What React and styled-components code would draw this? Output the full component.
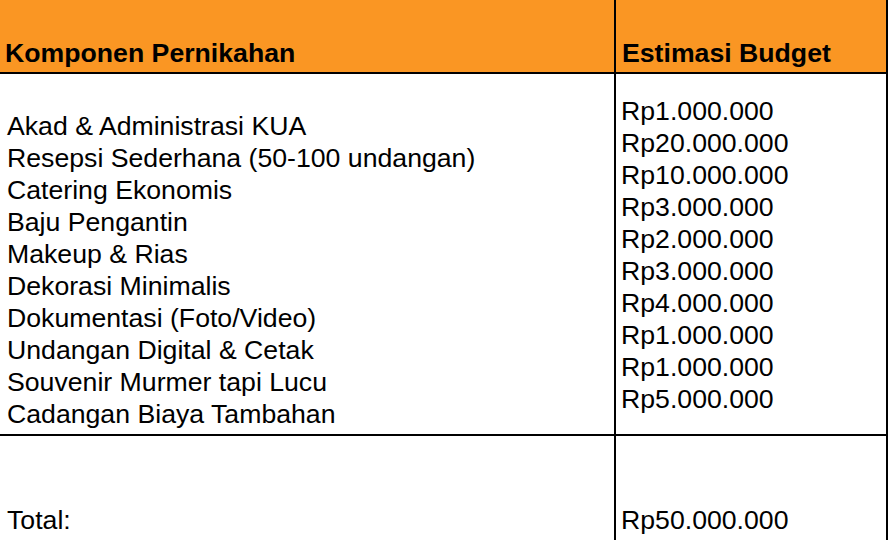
import React from "react";
import styled, { createGlobalStyle } from "styled-components";

const Global = createGlobalStyle`
  html, body { margin: 0; padding: 0; background: #fff; }
  body { font-family: "Liberation Sans", Arial, sans-serif; color: #000; }
`;

const Sheet = styled.div`
  width: 888px;
  font-size: 26.667px;
  line-height: 32px;
`;

const Row = styled.div`
  display: grid;
  grid-template-columns: 614px 274px;
  min-height: ${(p) => p.$height}px;
  background: ${(p) => p.$bg || "#fff"};
  border-bottom: ${(p) => (p.$last ? "none" : "2px solid #000")};
  font-weight: ${(p) => (p.$bold ? 700 : 400)};
`;

const Cell = styled.div`
  display: flex;
  flex-direction: column;
  justify-content: ${(p) => p.$align || "flex-start"};
  padding: ${(p) => p.$pt || 0}px 0 ${(p) => p.$pb || 0}px ${(p) => p.$pl || 6}px;
  ${(p) => p.$right && "border-left: 2px solid #000; border-right: 2px solid #000;"}
`;

const Line = styled.div`
  white-space: nowrap;
`;

const items = [
  ["Akad & Administrasi KUA", "Rp1.000.000"],
  ["Resepsi Sederhana (50-100 undangan)", "Rp20.000.000"],
  ["Catering Ekonomis", "Rp10.000.000"],
  ["Baju Pengantin", "Rp3.000.000"],
  ["Makeup & Rias", "Rp2.000.000"],
  ["Dekorasi Minimalis", "Rp3.000.000"],
  ["Dokumentasi (Foto/Video)", "Rp4.000.000"],
  ["Undangan Digital & Cetak", "Rp1.000.000"],
  ["Souvenir Murmer tapi Lucu", "Rp1.000.000"],
  ["Cadangan Biaya Tambahan", "Rp5.000.000"],
];

export default function App() {
  return (
    <>
      <Global />
      <Sheet>
        <Row $height={72} $bg="#FA9623" $bold>
          <Cell $align="flex-end" $pb={3} $pl={5}>
            <Line>Komponen Pernikahan</Line>
          </Cell>
          <Cell $right $align="flex-end" $pb={3} $pl={6}>
            <Line>Estimasi Budget</Line>
          </Cell>
        </Row>
        <Row $height={360}>
          <Cell $align="flex-end" $pb={4} $pl={7}>
            {items.map(([name]) => (
              <Line key={name}>{name}</Line>
            ))}
          </Cell>
          <Cell $right $pt={21} $pl={5}>
            {items.map(([name, cost]) => (
              <Line key={name}>{cost}</Line>
            ))}
          </Cell>
        </Row>
        <Row $height={110} $last>
          <Cell $pt={68} $pl={7}>
            <Line>Total:</Line>
          </Cell>
          <Cell $right $pt={68} $pl={5}>
            <Line>Rp50.000.000</Line>
          </Cell>
        </Row>
      </Sheet>
    </>
  );
}
